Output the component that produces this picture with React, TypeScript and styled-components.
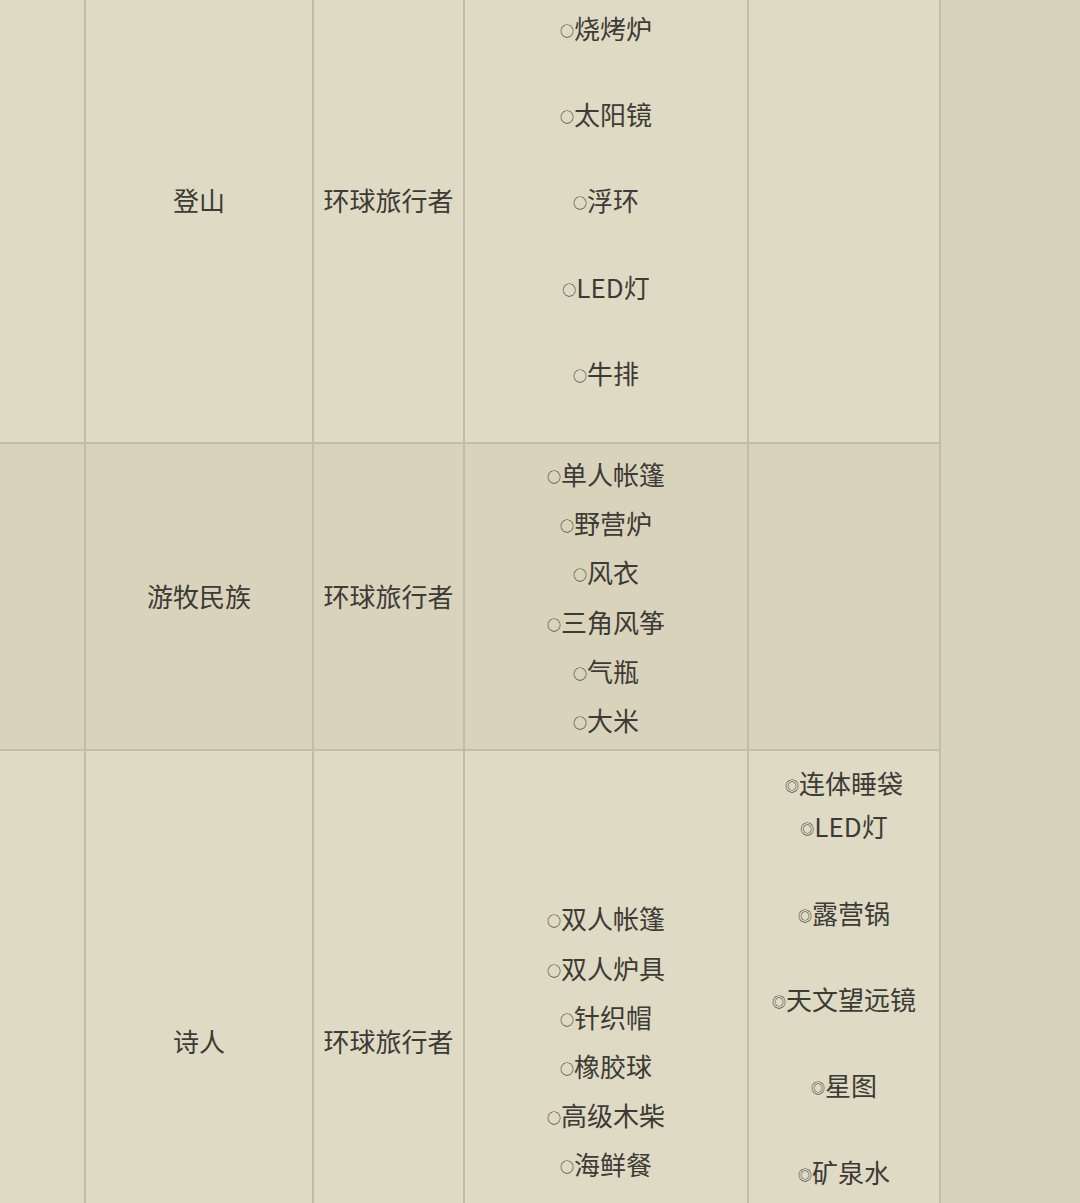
import React from "react";
import styled, { createGlobalStyle } from "styled-components";

const GlobalStyle = createGlobalStyle`
  html, body {
    margin: 0;
    padding: 0;
    background: #d8d3bc;
    overflow: hidden;
  }
  body {
    font-family: "Noto Sans CJK SC", "Noto Sans", sans-serif;
    color: #3c3b36;
  }
`;

type Row = {
  name: string;
  role: string;
  gear: string[];
  gearLine: number;
  extra: string[];
  extraLine: number;
  height: number;
  shaded?: boolean;
};

const columns = [86, 228, 151, 284, 192];

const rows: Row[] = [
  {
    name: "登山",
    role: "环球旅行者",
    gear: ["烧烤炉", "", "太阳镜", "", "浮环", "", "LED灯", "", "牛排"],
    gearLine: 43.2,
    extra: [],
    extraLine: 43.2,
    height: 486,
  },
  {
    name: "游牧民族",
    role: "环球旅行者",
    gear: ["单人帐篷", "野营炉", "风衣", "三角风筝", "气瓶", "大米"],
    gearLine: 49.2,
    extra: [],
    extraLine: 43.2,
    height: 307,
    shaded: true,
  },
  {
    name: "诗人",
    role: "环球旅行者",
    gear: ["双人帐篷", "双人炉具", "针织帽", "橡胶球", "高级木柴", "海鲜餐"],
    gearLine: 49.2,
    extra: ["连体睡袋", "LED灯", "", "露营锅", "", "天文望远镜", "", "星图", "", "矿泉水"],
    extraLine: 43.2,
    height: 582,
  },
];

type ListProps = { items: string[]; line: number; mark: string };

function ItemList({ items, line, mark }: ListProps) {
  return (
    <List>
      {items.map((g, j) => (
        <Item key={j} $line={line}>
          {g && (
            <>
              <Mark>{mark}</Mark>
              {g}
            </>
          )}
        </Item>
      ))}
    </List>
  );
}

function App() {
  return (
    <>
      <GlobalStyle />
      <Page>
        <Table>
          <colgroup>
            {columns.map((w, i) => (
              <Col key={i} $w={w} />
            ))}
          </colgroup>
          <tbody>
            {rows.map((row, i) => (
              <Tr key={i} $shaded={row.shaded} $h={row.height}>
                <Td />
                <Td>{row.name}</Td>
                <Td>{row.role}</Td>
                <Td>
                  <ItemList items={row.gear} line={row.gearLine} mark="○" />
                </Td>
                <Td $top={row.extra.length > 0}>
                  <ItemList items={row.extra} line={row.extraLine} mark="◎" />
                </Td>
              </Tr>
            ))}
          </tbody>
        </Table>
      </Page>
    </>
  );
}

const Page = styled.div`
  width: 1080px;
  height: 1203px;
  overflow: hidden;
`;

const Table = styled.table`
  border-collapse: collapse;
  table-layout: fixed;
  width: 943px;
  margin-top: -44px;
  margin-left: -2px;
  font-size: 26px;
`;

const Col = styled.col<{ $w: number }>`
  width: ${(p) => p.$w}px;
`;

const Tr = styled.tr<{ $shaded?: boolean; $h: number }>`
  height: ${(p) => p.$h}px;
  background: ${(p) => (p.$shaded ? "#d9d3bc" : "#dfdac3")};
`;

const Td = styled.td<{ $top?: boolean }>`
  border: 2px solid #c2bdaa;
  padding: ${(p) => (p.$top ? "10px 4px" : "4px")};
  text-align: center;
  vertical-align: ${(p) => (p.$top ? "top" : "middle")};
  line-height: 1.4;
`;

const List = styled.div`
  display: flex;
  flex-direction: column;
  align-items: center;
`;

const Item = styled.div<{ $line: number }>`
  height: ${(p) => p.$line}px;
  line-height: ${(p) => p.$line}px;
  white-space: nowrap;
`;

const Mark = styled.span`
  font-size: 14px;
  line-height: 1;
  vertical-align: 3px;
  color: #2e2d29;
`;

export default App;
